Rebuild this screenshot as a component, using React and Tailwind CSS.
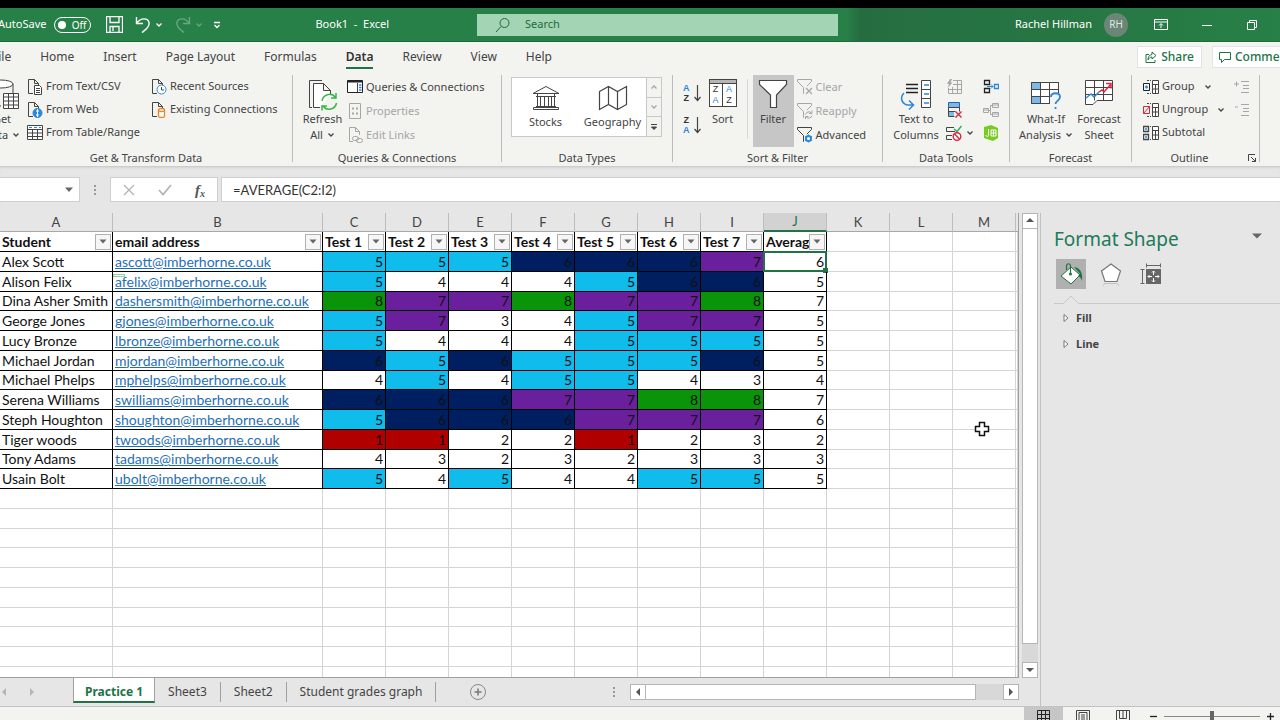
import React, { useState } from 'react';

const GREY = '#a6a6a6';
const DARK = '#444444';
const BLUE = '#2b88d8';

const columns = ['A', 'B', 'C', 'D', 'E', 'F', 'G', 'H', 'I', 'J', 'K', 'L', 'M'];
const headings = ['Student', 'email address', 'Test 1', 'Test 2', 'Test 3', 'Test 4', 'Test 5', 'Test 6', 'Test 7', 'Averag'];

const students = [
  { name: 'Alex Scott', email: 'ascott@imberhorne.co.uk', marks: [5, 5, 5, 6, 6, 6, 7, 6] },
  { name: 'Alison Felix', email: 'afelix@imberhorne.co.uk', marks: [5, 4, 4, 4, 5, 6, 6, 5] },
  { name: 'Dina Asher Smith', email: 'dashersmith@imberhorne.co.uk', marks: [8, 7, 7, 8, 7, 7, 8, 7] },
  { name: 'George Jones', email: 'gjones@imberhorne.co.uk', marks: [5, 7, 3, 4, 5, 7, 7, 5] },
  { name: 'Lucy Bronze', email: 'lbronze@imberhorne.co.uk', marks: [5, 4, 4, 4, 5, 5, 5, 5] },
  { name: 'Michael Jordan', email: 'mjordan@imberhorne.co.uk', marks: [6, 5, 6, 5, 5, 5, 6, 5] },
  { name: 'Michael Phelps', email: 'mphelps@imberhorne.co.uk', marks: [4, 5, 4, 5, 5, 4, 3, 4] },
  { name: 'Serena Williams', email: 'swilliams@imberhorne.co.uk', marks: [6, 6, 6, 7, 7, 8, 8, 7] },
  { name: 'Steph Houghton', email: 'shoughton@imberhorne.co.uk', marks: [5, 6, 6, 6, 7, 7, 7, 6] },
  { name: 'Tiger woods', email: 'twoods@imberhorne.co.uk', marks: [1, 1, 2, 2, 1, 2, 3, 2] },
  { name: 'Tony Adams', email: 'tadams@imberhorne.co.uk', marks: [4, 3, 2, 3, 2, 3, 3, 3] },
  { name: 'Usain Bolt', email: 'ubolt@imberhorne.co.uk', marks: [5, 4, 5, 4, 4, 5, 5, 5] },
];

const markColors = {
  1: 'bg-[#b00000]',
  5: 'bg-[#10bcec]',
  6: 'bg-[#001f60]',
  7: 'bg-[#6a209c]',
  8: 'bg-[#0a940a]',
};

// every fourth row is a pixel shorter
const rowHeight = (i) => (i % 4 === 3 ? 'h-[19px]' : 'h-5');

const Svg = ({ w = 16, h = 16, children, className = '' }) => (
  <svg width={w} height={h} viewBox={`0 0 ${w} ${h}`} fill="none" stroke={DARK} strokeWidth="1" className={`shrink-0 ${className}`} aria-hidden="true">
    {children}
  </svg>
);

const Chevron = ({ color = DARK, className = '' }) => (
  <Svg w={8} h={6} className={className}><path d="M1.5 1.5 4 4l2.5-2.5" stroke={color} strokeWidth="1.3" /></Svg>
);

const Page = ({ color = DARK, children }) => (
  <Svg>
    <path d="M6 14.5H1.5v-14h6l4 4V7M7.5.5v4h4" stroke={color} />
    {children}
  </Svg>
);

const IconCsv = () => (
  <Page><path d="M7.5 6.500h5l2 2v7h-7zM9 9.500h4M9 11.500h4M9 13.500h4" fill="#fff" /></Page>
);
const IconWeb = () => (
  <Page>
    <circle cx="10.500" cy="11" r="4.500" fill={BLUE} stroke={BLUE} />
    <path d="M10.500 7v8M9 9h3M9 13h3" stroke="#fff" />
  </Page>
);
const IconTable = () => (
  <Svg>
    <path d="M.5.500h15v14H.5zM.5 4.500h15M.5 8h15M.5 11.500h15M5.500 4.500v10M10.500 4.500v10" fill="#fff" />
    <path d="M2 2.500h3M7 2.500h3M12 2.500h2" stroke={BLUE} />
  </Svg>
);
const IconRecent = () => (
  <Page>
    <circle cx="10.500" cy="10.500" r="4.500" fill="#fff" stroke={BLUE} />
    <path d="M10.500 8v3H13" />
  </Page>
);
const IconExisting = () => (
  <Page>
    <path d="M7.500 8v6c0 2 6 2 6 0V8" fill="#fff" stroke="#e8832a" strokeWidth="1.3" />
    <ellipse cx="10.500" cy="8" rx="3" ry="1.500" fill="#fff" stroke="#e8832a" strokeWidth="1.300" />
  </Page>
);
const IconQueries = () => (
  <Svg>
    <path d="M.5 1.500h15v12H.5z" fill="#fff" stroke="#222" />
    <path d="M.5 2.500h15" stroke="#222" strokeWidth="2" />
    <path d="M10.500 4v9" />
    <path d="M12 6h2.500M12 8.500h2.500M12 11h2.500" stroke={BLUE} strokeWidth="1.400" />
  </Svg>
);
const IconProperties = () => (
  <Svg>
    <path d="M2.500.500h11v15h-11z" stroke={GREY} />
    <path d="M5 5.500h2M5 10.500h2M9 5.500h2M9 10.500h2" stroke={GREY} strokeWidth="2" />
  </Svg>
);
const IconLinks = () => (
  <Svg>
    <path d="M6 14.500H2.500v-14h6l4 4V8M8.500.500v4h4" stroke={GREY} />
    <rect x="5.500" y="9.500" width="6" height="4" rx="2" stroke={GREY} />
    <rect x="9.500" y="11.500" width="6" height="4" rx="2" stroke={GREY} />
  </Svg>
);
const IconGetData = () => (
  <Svg w={34} h={32}>
    <ellipse cx="16" cy="5" rx="12" ry="4" fill="#fff" />
    <path d="M4 5v18c0 3 6 4 12 4M28 5v9" />
    <path d="M18.500 14.500h15v15h-15zM18.500 18h15M18.500 22h15M18.500 26h15M23.500 14.500v15M28.500 14.500v15" fill="#fff" />
  </Svg>
);
const IconRefresh = () => (
  <Svg w={30} h={32}>
    <path d="M4 28.500H1.500V1.500H14" />
    <path d="M12 28.500H5.500V4.500h10l7 7V15M15.500 4.500v7h7" fill="#fff" />
    <g stroke="#3bb44a" strokeWidth="1.500">
      <path d="M14 22a7.500 7.500 0 0 1 13.500-3.500M28 14v5h-5" />
      <path d="M28.500 24A7.500 7.500 0 0 1 15 27M14 31.500V27h5" />
    </g>
  </Svg>
);
const IconStocks = () => (
  <Svg w={30} h={28}>
    <path d="M2 8.500 15 1.500l13 7zM5 11.500h20M5 21.500h20M2.500 24.500h25v-2h-25zM6.500 9v12M9.500 12v9M13.500 12v9M17.500 12v9M20.500 12v9M23.500 9v12" />
  </Svg>
);
const IconMap = () => (
  <Svg w={30} h={28}>
    <path d="M1.500 6.500 10.500 1.500l9 5 9-5v18l-9 5-9-5-9 5zM10.500 1.500v18M19.500 6.500v18" strokeWidth="1.200" />
  </Svg>
);

const SortLetters = ({ first, second }) => (
  <span className="flex items-center gap-1">
    <span className="flex flex-col font-['Liberation_Sans',sans-serif] text-[9px] font-bold leading-[10px]">
      <span className={first === 'A' ? 'text-[#2b88d8]' : 'text-[#333]'}>{first}</span>
      <span className={second === 'A' ? 'text-[#2b88d8]' : 'text-[#333]'}>{second}</span>
    </span>
    <Svg w={7} h={18}><path d="M3.500 1v15M.5 13l3 3.500 3-3.500" strokeWidth="1.200" /></Svg>
  </span>
);

const IconSort = () => (
  <span className="flex h-7 w-7 flex-col border border-[#444] bg-white font-['Liberation_Sans',sans-serif] text-[9px] leading-[11px]">
    <span className="h-1 border-b border-[#444] bg-[#b5b5b5]" />
    <span className="grid flex-1 grid-cols-2 text-center">
      <span className="border-r border-[#444] text-[#333]">Z</span>
      <span className="text-[#2b88d8]">A</span>
      <span className="border-r border-[#444] text-[#2b88d8]">A</span>
      <span className="text-[#333]">Z</span>
    </span>
  </span>
);

const IconFunnel = () => (
  <Svg w={30} h={30}><path d="M1.500 1.500h27v4L18.500 16v12.500h-6V16L1.500 5.500z" fill="#fff" strokeWidth="1.200" /></Svg>
);
const SmallFunnel = ({ color, children }) => (
  <Svg>
    <path d="M7 14.500h-.5V8.500L.5 2.500v-2h14v2L10 7" stroke={color} />
    {children}
  </Svg>
);
const IconClear = () => <SmallFunnel color={GREY}><path d="m9 9 6 6M15 9l-6 6" stroke={GREY} strokeWidth="1.300" /></SmallFunnel>;
const IconReapply = () => (
  <SmallFunnel color={GREY}>
    <path d="M8.500 11.500a3.500 3.500 0 0 1 6-1.500M15 7.500v3h-3M15 12.500a3.500 3.500 0 0 1-6 1.500M8.500 16v-2.500h3" stroke={GREY} />
  </SmallFunnel>
);
const IconAdvanced = () => (
  <SmallFunnel color={DARK}>
    <circle cx="11.500" cy="11.500" r="2.500" stroke={BLUE} strokeWidth="2" />
    <path d="M11.500 7.500v8M8 9.500l7 4M15 9.500l-7 4" stroke={BLUE} strokeWidth="1.200" />
    <circle cx="11.500" cy="11.500" r="1.500" fill="#fff" stroke="none" />
  </SmallFunnel>
);

const IconTextColumns = () => (
  <Svg w={32} h={32}>
    <path d="M6 5.500h12M6 9.500h12M6 13.500h12" strokeWidth="1.300" stroke="#222" />
    <path d="M21.500 1.500h9v27h-9zM21.500 10.500h9M21.500 19.500h9" fill="#fff" />
    <path d="M24 6h5M24 15h5M24 24h5" stroke={BLUE} strokeWidth="1.300" />
    <path d="M4 14c-4 4-3 10 3 12h6M9 21.500l4.500 4.500L9 30.500" stroke={BLUE} strokeWidth="1.500" />
  </Svg>
);
const IconFlashFill = () => (
  <Svg>
    <path d="M7 1.500h8.500v13h-13V9M2.500 10.500h13M7 5.500h8.500M6.500 8v6M11.500 1.500v13" stroke={GREY} />
    <path d="M4 0 1 5h2L1.500 9l5-5.500h-2L6 0z" fill={GREY} stroke="none" />
  </Svg>
);
const IconDuplicates = () => (
  <Svg>
    <path d="M2.500.500h11v5h-11z" fill="#7db8ea" stroke="#2467a8" />
    <path d="M2.500 5.500h11v4M2.500 5.500v9h6M2.500 9.500h7" />
    <path d="M3 10h5v4H3z" fill="#7db8ea" stroke="none" />
    <path d="m9.500 9.500 6 6M15.500 9.500l-6 6" stroke="#e0263c" strokeWidth="1.400" />
  </Svg>
);
const IconValidation = () => (
  <Svg>
    <path d="M8 2.500H.5v4H9M6 10.500H.5v4H6" />
    <path d="m8 4 3 2.500L15.500 1" stroke="#2fa84f" strokeWidth="1.400" />
    <circle cx="11" cy="11.500" r="3.800" fill="#fff" stroke="#d9263c" strokeWidth="1.400" />
    <path d="m8.500 9 5 5" stroke="#d9263c" strokeWidth="1.400" />
  </Svg>
);
const IconConsolidate = () => (
  <Svg>
    <path d="M1.500 1.500h5v4h-5zM1.500 9.500h5v4h-5z" stroke="#222" strokeWidth="1.300" />
    <path d="M11.500 5.500h4v4h-4z" stroke={BLUE} strokeWidth="1.300" />
    <path d="M4 7.500h6M8 5.500l2 2-2 2" stroke={BLUE} />
  </Svg>
);
const IconRelations = () => (
  <Svg>
    <path d="M.5 6.500h5v4h-5zM9.500 1.500h6v4h-6zM9.500 10.500h6v4h-6zM.5 8h5M9.500 3h6M9.500 12h6M5.500 8.500h2v-5h2M7.500 8.500v4h2" stroke={GREY} />
  </Svg>
);
const IconModel = () => (
  <Svg>
    <path d="M1 2 8 0l7 3v10l-5 3-9-3z" fill="#77cc1f" stroke="none" />
    <path d="M5.500 4v6c0 2-2.500 2-2.500 0M8 5h5v6H8zM8 8h5M10.500 5v6" stroke="#fff" />
  </Svg>
);
const IconWhatIf = () => (
  <Svg w={32} h={32}>
    <path d="M1.500 3.500h27v21h-27z" fill="#fff" />
    <path d="M2 4h9v6H2zM2 17h9v7H2z" fill="#7db8ea" stroke="none" />
    <path d="M1.500 3.500h27v21h-27zM1.500 10.500h27M1.500 17.500h27M10.500 3.500v21M19.500 3.500v21" />
    <path d="M20 14h11v16H20z" fill="#f3f3f0" stroke="none" />
    <path d="M21 18c0-5 9-5 9 0 0 4-4.500 3.500-4.500 7M25.500 28v2" stroke={BLUE} strokeWidth="1.800" />
  </Svg>
);
const IconForecast = () => (
  <Svg w={30} h={30}>
    <path d="M1.500 1.500h27v20H13l-4 4H1.500zM1.500 8.500h27M1.500 15.500h27M10.500 1.500v20M19.500 1.500v20" fill="#fff" />
    <path d="m2 19 5-4 3 3 5-5" stroke={BLUE} strokeWidth="1.500" />
    <path d="m15 13 3-2 2 2 7-8M22 4.500h5v5" stroke="#e0263c" strokeWidth="1.500" />
  </Svg>
);
const IconOutline = ({ mark }) => (
  <Svg>
    <path d="M9.500 1.500h6v13h-6zM9.500 5.500h6M9.500 10h6M12.500 5.500v9" fill="#fff" />
    <path d="M4 1.500h4M4 14.500h4" strokeDasharray="2 1" />
    {mark === 'sub' ? (
      <>
        <path d="M.5 1.500h5v5h-5zM.5 9.500h5v5h-5z" strokeWidth="1.300" />
        <path d="M2 4h2M2 12h2" stroke={BLUE} strokeWidth="1.500" />
      </>
    ) : (
      <path d="M.500 4.500h6v7h-6z" stroke={mark === 'minus' ? '#d9263c' : '#222'} />
    )}
    {mark === 'plus' && <path d="M2 8h3M3.500 6.500v3" stroke={BLUE} strokeWidth="1.300" />}
    {mark === 'minus' && <path d="m.5 11.500 6-7" stroke="#d9263c" />}
  </Svg>
);
const IconDetail = ({ plus }) => (
  <Svg>
    <path d="M7 2.500h8M9 6.500h6M9 9.500h6M7 13.500h8" stroke={GREY} />
    <path d={plus ? 'M0 5h5M2.500 2.500v5' : 'M1 5h3'} stroke={GREY} />
  </Svg>
);

const Group = ({ title, width, children, launcher }) => (
  <>
    <section aria-label={title} className={`flex shrink-0 flex-col ${width}`}>
      <div className="flex h-[75px] items-start">{children}</div>
      <div className="flex h-4 items-center">
        <span className="flex-1 text-center leading-4">{title}</span>
        {launcher && (
          <button aria-label={`${title} settings`} className="mr-[2px]">
            <Svg w={10} h={10}><path d="M1.500 8V1.500H8M4 4l4.500 4.500M8.500 5v3.500H5" /></Svg>
          </button>
        )}
      </div>
    </section>
    <div className="h-[87px] w-px shrink-0 bg-[#bdbdbd]" />
  </>
);

const BigButton = ({ icon, lines, arrow, className = '' }) => (
  <button className={`flex shrink-0 flex-col items-center pt-1 ${className}`}>
    <span className="flex h-8 items-start justify-center">{icon}</span>
    {lines.map((line, i) => (
      <span key={line} className="flex h-4 items-center gap-1 whitespace-nowrap leading-4">
        {line}
        {arrow && i === lines.length - 1 && <Chevron />}
      </span>
    ))}
  </button>
);

const SmallButton = ({ icon, label, disabled, arrow, tall }) => (
  <button disabled={disabled} className={`flex items-center gap-[3px] whitespace-nowrap ${tall ? 'h-6' : 'h-[23px]'} ${disabled ? 'text-[#a6a6a6]' : ''}`}>
    {icon}
    {label}
    {arrow && <Chevron className="ml-[6px]" />}
  </button>
);

const TitleBar = () => (
  <header className="flex h-[34px] shrink-0 items-center overflow-hidden border-b border-[#1d6a3a] bg-[#278047] text-white">
    <div className="flex w-[477px] shrink-0 items-center">
      <label className="-ml-[2px] flex items-center gap-2">
        <span>AutoSave</span>
        <input type="checkbox" className="sr-only" />
        <span className="flex h-4 w-[37px] items-center justify-between rounded-full border border-white pl-[3px] pr-1 text-[10px] leading-3">
          <span className="h-2 w-2 rounded-full bg-white" />
          Off
        </span>
      </label>
      <button aria-label="Save" className="ml-[15px]">
        <Svg w={17} h={17}><path d="M.5.500h16v16H.5zM4 .5v6h9V.5M4 16.500v-6h9v6M7 11v4" stroke="#fff" strokeWidth="1.300" /></Svg>
      </button>
      <button aria-label="Undo" className="ml-3 flex items-center gap-1">
        <Svg w={16} h={17}><path d="M1.500 1v6.500H8M1.500 7.500C6 1 13 2 14 6.500S10 14 7 16.500" stroke="#fff" strokeWidth="1.400" /></Svg>
        <Chevron color="#fff" />
      </button>
      <button aria-label="Redo" disabled className="ml-3 flex items-center gap-1 opacity-30">
        <Svg w={16} h={17}><path d="M14.500 1v6.500H8M14.500 7.500C10 1 3 2 2 6.500S6 14 9 16.500" stroke="#fff" strokeWidth="1.400" /></Svg>
        <Chevron color="#fff" />
      </button>
      <button aria-label="Customize Quick Access Toolbar" className="ml-[10px]">
        <Svg w={8} h={8}><path d="M1 1.500h6M1.500 4 4 6.500 6.500 4" stroke="#fff" strokeWidth="1.300" /></Svg>
      </button>
      <h1 className="ml-[94px] whitespace-pre">Book1  -  Excel</h1>
    </div>
    <label className="flex h-[22px] w-[361px] shrink-0 items-center gap-[14px] bg-[#a3d4b4] pl-[18px]">
      <Svg><circle cx="9.500" cy="6" r="4.500" stroke="#1e6b3c" /><path d="M6 9.500 1 15" stroke="#1e6b3c" /></Svg>
      <input type="search" aria-label="Search" placeholder="Search" className="w-full bg-transparent text-[#1e6b3c] outline-none placeholder:text-[#1e6b3c]" />
    </label>
    <div className="flex h-full flex-1 items-center bg-linear-to-r from-[#278047] from-2% via-[#256d40] via-5% to-[#278047]">
      <button className="ml-[176px] flex shrink-0 items-center gap-[11px]">
        <span className="w-[79px] whitespace-nowrap">Rachel Hillman</span>
        <span className="flex h-6 w-6 items-center justify-center rounded-full bg-[#6b8577] text-[10px] text-[#dfe8e2]">RH</span>
      </button>
      <button aria-label="Ribbon display options" className="ml-[26px]">
        <Svg w={14} h={12}><path d="M.5.500h13v10H.5zM.5 3h13M7 9V5M5 6.500 7 4.500l2 2" stroke="#fff" /></Svg>
      </button>
      <button aria-label="Minimize" className="ml-[34px]">
        <Svg w={11} h={12}><path d="M0 6.500h10" stroke="#fff" /></Svg>
      </button>
      <button aria-label="Restore" className="ml-[34px]">
        <Svg w={11} h={12}><path d="M.5 3.500h7v7h-7zM2.500 3V1.500h7v7H8" stroke="#fff" /></Svg>
      </button>
    </div>
  </header>
);

const MenuTabs = () => {
  const [active, setActive] = useState('Data');
  const tabs = ['File', 'Home', 'Insert', 'Page Layout', 'Formulas', 'Data', 'Review', 'View', 'Help'];
  return (
    <div className="flex h-[33px] shrink-0 items-start overflow-hidden">
      <nav className="-ml-2 flex flex-1 gap-[29px] pt-[5px] text-[12px]">
        {tabs.map((tab) => (
          <button
            key={tab}
            onClick={() => setActive(tab)}
            className={`h-[22px] whitespace-nowrap border-b-2 ${tab === active ? 'border-[#217346] font-semibold text-[#333]' : 'border-transparent'}`}
          >
            {tab}
          </button>
        ))}
      </nav>
      <div className="-mr-7 flex gap-[10px] pt-1 text-[12px] font-medium text-[#217346]">
        <button className="flex h-[22px] w-[65px] items-center justify-center gap-1 border border-[#e3e3e1] bg-white">
          <Svg w={12} h={13}><path d="M4 3.500H1v8h9V9M7 1l4 3.500L7 8V6C5 6 4 7 3 9c0-3 1-5 4-5.500z" stroke="#217346" /></Svg>
          Share
        </button>
        <button className="flex h-[22px] w-24 items-center gap-1 border border-[#e3e3e1] bg-white pl-[6px]">
          <Svg w={12} h={12}><path d="M.5 1.500h11v7h-6l-3 3v-3h-2z" stroke="#217346" /></Svg>
          Comments
        </button>
      </div>
    </div>
  );
};

const Ribbon = () => (
  <div className="flex h-[91px] shrink-0 overflow-hidden">
    <Group title="Get & Transform Data" width="w-[292px]">
      <BigButton icon={<IconGetData />} lines={['Get', 'Data']} arrow className="-ml-[15px] w-[34px]" />
      <div className="ml-2 flex w-[125px] flex-col">
        <SmallButton icon={<IconCsv />} label="From Text/CSV" />
        <SmallButton icon={<IconWeb />} label="From Web" />
        <SmallButton icon={<IconTable />} label="From Table/Range" />
      </div>
      <div className="-ml-px flex flex-col">
        <SmallButton icon={<IconRecent />} label="Recent Sources" />
        <SmallButton icon={<IconExisting />} label="Existing Connections" />
      </div>
    </Group>
    <Group title="Queries & Connections" width="w-[208px]">
      <BigButton icon={<IconRefresh />} lines={['Refresh', 'All']} arrow className="ml-2 w-[43px]" />
      <div className="ml-[3px] flex flex-col">
        <SmallButton tall icon={<IconQueries />} label="Queries & Connections" />
        <SmallButton tall icon={<IconProperties />} label="Properties" disabled />
        <SmallButton tall icon={<IconLinks />} label="Edit Links" disabled />
      </div>
    </Group>
    <Group title="Data Types" width="w-[170px]">
      <div className="ml-[9px] mt-[2px] flex h-[60px] w-[151px] border border-[#c8c8c8] bg-white">
        <button className="flex flex-1 flex-col items-center pt-[7px]">
          <IconStocks />
          <span className="mt-px leading-4">Stocks</span>
        </button>
        <button className="flex flex-1 flex-col items-center pt-[7px]">
          <IconMap />
          <span className="mt-px leading-4">Geography</span>
        </button>
        <div className="flex w-[15px] flex-col border-l border-[#c8c8c8] bg-[#f3f3f0]">
          <button aria-label="Previous" className="flex flex-1 items-center justify-center border-b border-[#c8c8c8]"><Chevron color="#a6a6a6" className="rotate-180" /></button>
          <button aria-label="Next" className="flex flex-1 items-center justify-center border-b border-[#c8c8c8]"><Chevron color="#a6a6a6" /></button>
          <button aria-label="More" className="flex flex-1 items-center justify-center">
            <Svg w={8} h={8}><path d="M1 1.500h6M1.500 4 4 6.500 6.500 4z" fill={DARK} /></Svg>
          </button>
        </div>
      </div>
    </Group>
    <Group title="Sort & Filter" width="w-[209px]">
      <div className="ml-[10px] mt-2 flex flex-col gap-3">
        <button aria-label="Sort A to Z"><SortLetters first="A" second="Z" /></button>
        <button aria-label="Sort Z to A"><SortLetters first="Z" second="A" /></button>
      </div>
      <BigButton icon={<IconSort />} lines={['Sort']} className="ml-[6px] w-8" />
      <div className="ml-2 mt-1 h-[60px] w-px bg-[#d8d8d6]" />
      <BigButton icon={<IconFunnel />} lines={['Filter']} className="ml-[5px] h-[72px] w-[41px] bg-[#c6c6c6]" />
      <div className="ml-[3px] flex flex-col">
        <SmallButton tall icon={<IconClear />} label="Clear" disabled />
        <SmallButton tall icon={<IconReapply />} label="Reapply" disabled />
        <SmallButton tall icon={<IconAdvanced />} label="Advanced" />
      </div>
    </Group>
    <Group title="Data Tools" width="w-[126px]">
      <BigButton icon={<IconTextColumns />} lines={['Text to', 'Columns']} className="ml-2 w-[50px]" />
      <div className="ml-[5px] flex w-[37px] flex-col">
        <button aria-label="Flash Fill" className="flex h-[23px] items-center"><IconFlashFill /></button>
        <button aria-label="Remove Duplicates" className="flex h-[23px] items-center"><IconDuplicates /></button>
        <button aria-label="Data Validation" className="flex h-[23px] items-center gap-1"><IconValidation /><Chevron /></button>
      </div>
      <div className="flex flex-col">
        <button aria-label="Consolidate" className="flex h-[23px] items-center"><IconConsolidate /></button>
        <button aria-label="Relationships" disabled className="flex h-[23px] items-center"><IconRelations /></button>
        <button aria-label="Manage Data Model" className="flex h-[23px] items-center"><IconModel /></button>
      </div>
    </Group>
    <Group title="Forecast" width="w-[121px]">
      <BigButton icon={<IconWhatIf />} lines={['What-If', 'Analysis']} arrow className="ml-2 w-[56px]" />
      <BigButton icon={<IconForecast />} lines={['Forecast', 'Sheet']} className="w-[50px]" />
    </Group>
    <Group title="Outline" width="w-[127px]" launcher>
      <div className="ml-[11px] flex w-[91px] flex-col">
        <SmallButton icon={<IconOutline mark="plus" />} label="Group" arrow />
        <SmallButton icon={<IconOutline mark="minus" />} label="Ungroup" arrow />
        <SmallButton icon={<IconOutline mark="sub" />} label="Subtotal" />
      </div>
      <div className="flex flex-col">
        <button aria-label="Show Detail" disabled className="flex h-[23px] items-center"><IconDetail plus /></button>
        <button aria-label="Hide Detail" disabled className="flex h-[23px] items-center"><IconDetail /></button>
      </div>
    </Group>
  </div>
);

const FormulaBar = () => (
  <div className="flex h-[47px] shrink-0 items-center bg-[#e6e6e6] shadow-[inset_0_3px_3px_-2px_#c0c0c0]">
    <div className="flex h-[25px] w-20 shrink-0 items-center border border-l-0 border-[#cfcfcf] bg-white pr-[5px]">
      <input aria-label="Name Box" className="w-full min-w-0 flex-1 outline-none" />
      <Svg w={10} h={6}><path d="M1 .5h8l-4 4.500z" fill="#666" stroke="none" /></Svg>
    </div>
    <Svg w={30} h={12}><path d="M15 1v2M15 5v2M15 9v2" stroke="#999" strokeWidth="2" /></Svg>
    <div className="flex h-[25px] w-[108px] shrink-0 items-center justify-between border border-[#cfcfcf] bg-white px-3">
      <button aria-label="Cancel"><Svg w={12} h={12}><path d="m1 1 10 10M11 1 1 11" stroke="#b5b5b5" strokeWidth="1.400" /></Svg></button>
      <button aria-label="Enter"><Svg w={14} h={12}><path d="m1 6 4 4.500L13 1" stroke="#b5b5b5" strokeWidth="1.800" /></Svg></button>
      <button aria-label="Insert Function" className="font-['Liberation_Serif',serif] text-[15px] font-bold italic leading-4 text-[#555]">f<sub className="text-[10px]">x</sub></button>
    </div>
    <input
      aria-label="Formula"
      defaultValue="=AVERAGE(C2:I2)"
      className="ml-[3px] h-[25px] min-w-0 flex-1 border border-r-0 border-[#cfcfcf] bg-white px-[11px] font-['Lato',sans-serif] text-[13px] text-[#333] outline-none"
    />
  </div>
);

const FilterButton = ({ label }) => (
  <button aria-label={`Filter ${label}`} className="flex h-4 w-4 shrink-0 items-center justify-center border border-[#b0b0b0] bg-[#f6f6f6]">
    <Svg w={8} h={5}><path d="M.5.500h7L4 4.500z" fill="#666" stroke="none" /></Svg>
  </button>
);

const Grid = () => {
  const blank = 'border-b border-r border-[#d4d4d4]';
  const inked = 'border-b border-r border-black';
  return (
    <div className="relative min-w-0 flex-1 overflow-hidden border-b border-r border-[#a0a0a0] bg-white">
      <table className="w-full table-fixed border-separate border-spacing-0 font-['Lato',sans-serif] text-[14px] leading-[18px] text-[#111]">
        <colgroup>
          <col className="w-[113px]" />
          <col className="w-[210px]" />
          {columns.slice(2).map((c) => <col key={c} className="w-[63px]" />)}
          <col />
        </colgroup>
        <thead>
          <tr className="h-[19px] bg-[#e6e6e6] text-[13px] text-[#444]">
            {columns.map((c) => (
              <th
                key={c}
                scope="col"
                className={`border-r border-r-[#bdbdbd] p-0 font-normal ${c === 'J' ? 'border-b-2 border-b-[#217346] bg-[#d2d2d2] leading-[17px] text-[#217346]' : 'border-b border-b-[#a8a8a8]'}`}
              >
                {c}
              </th>
            ))}
            <td className="border-b border-[#a8a8a8] p-0" />
          </tr>
        </thead>
        <tbody>
          <tr className={rowHeight(0)}>
            {headings.map((h) => (
              <th key={h} scope="col" className={`p-0 text-left font-bold ${inked}`}>
                <div className="flex items-center pl-[2px] pr-px">
                  <span className="min-w-0 flex-1 overflow-hidden whitespace-nowrap">{h}</span>
                  <FilterButton label={h} />
                </div>
              </th>
            ))}
            {[0, 1, 2, 3].map((n) => <td key={n} className={`p-0 ${blank}`} />)}
          </tr>
          {students.map((s, r) => (
            <tr key={s.name} className={rowHeight(r + 1)}>
              <td className={`whitespace-nowrap p-0 pl-[2px] ${inked}`}>{s.name}</td>
              <td className={`relative whitespace-nowrap p-0 pl-[2px] ${inked}`}>
                {r === 1 && <span className="absolute left-0 top-[2px] h-[3px] w-3 border border-[#8fd19e] bg-white" />}
                <a href={`mailto:${s.email}`} className="text-[#1f6fb8] underline">{s.email}</a>
              </td>
              {s.marks.map((m, c) => (
                <td key={c} className={`relative p-0 pr-[2px] text-right ${inked} ${c < 7 ? markColors[m] || '' : ''}`}>
                  {m}
                  {r === 0 && c === 7 && (
                    <span className="absolute -inset-px border-2 border-[#217346]">
                      <span className="absolute -bottom-[3px] -right-[3px] h-[5px] w-[5px] bg-[#217346]" />
                    </span>
                  )}
                </td>
              ))}
              {[0, 1, 2, 3].map((n) => <td key={n} className={`p-0 ${blank}`} />)}
            </tr>
          ))}
          {Array.from({ length: 11 }, (_, r) => (
            <tr key={r} className={rowHeight(r + 13)}>
              {Array.from({ length: 14 }, (_, c) => <td key={c} className={`p-0 ${blank}`} />)}
            </tr>
          ))}
        </tbody>
      </table>
      {/* mouse pointer */}
      <Svg w={16} h={16} className="absolute left-[974px] top-[208px]">
        <path d="M5.500 1.500h5v4h4v5h-4v4h-5v-4h-4v-5h4z" fill="#fff" stroke="#111" strokeWidth="1.500" />
      </Svg>
    </div>
  );
};

const arrows = {
  up: 'M0 5h8L4 1z',
  down: 'M0 2h8L4 6z',
  left: 'M6 0v8L2 4z',
  right: 'M2 0v8l4-4z',
};

const ScrollArrow = ({ dir }) => (
  <button aria-label={`Scroll ${dir}`} className="flex h-4 w-4 shrink-0 items-center justify-center border border-[#b5b5b5] bg-white">
    <Svg w={8} h={8}><path d={arrows[dir]} fill="#555" stroke="none" /></Svg>
  </button>
);

const SheetTabs = () => {
  const [sheet, setSheet] = useState('Practice 1');
  return (
    <div className="flex h-7 shrink-0 items-center bg-[#e6e6e6] pr-[21px] text-[12px]">
      <div className="flex w-[73px] shrink-0 gap-5">
        <button aria-label="Previous sheet"><Svg w={8} h={8}><path d="M6 0v8L2 4z" fill="#b5b5b5" stroke="none" /></Svg></button>
        <button aria-label="Next sheet"><Svg w={8} h={8}><path d="M2 0v8l4-4z" fill="#b5b5b5" stroke="none" /></Svg></button>
      </div>
      {['Practice 1', 'Sheet3', 'Sheet2', 'Student grades graph'].map((name) => (
        <button
          key={name}
          onClick={() => setSheet(name)}
          className={
            name === sheet
              ? 'h-[25px] self-start whitespace-nowrap border-x border-b-2 border-x-[#a0a0a0] border-b-[#217346] bg-white px-[11px] pt-1 font-bold text-[#217346]'
              : 'h-5 whitespace-nowrap border-r border-[#a0a0a0] px-[13px]'
          }
        >
          {name}
        </button>
      ))}
      <button aria-label="New sheet" className="ml-[34px]">
        <Svg><circle cx="8" cy="8" r="7.500" stroke="#888" /><path d="M8 4.500v7M4.500 8h7" stroke="#777" strokeWidth="1.500" /></Svg>
      </button>
      <Svg w={4} h={12} className="ml-auto"><path d="M2 1v2M2 5v2M2 9v2" stroke="#999" strokeWidth="2" /></Svg>
      <div className="ml-[14px] flex w-[389px] shrink-0">
        <ScrollArrow dir="left" />
        <div className="flex flex-1 bg-[#d8d8d8] pr-[27px]">
          <div className="h-4 flex-1 border border-l-0 border-[#b5b5b5] bg-white" />
        </div>
        <ScrollArrow dir="right" />
      </div>
    </div>
  );
};

const FormatPanel = () => (
  <aside className="w-[240px] shrink-0 border-l border-[#c0c0c0] bg-[#e6e6e6] pl-[13px]">
    <div className="flex items-start justify-between pr-[18px] pt-3">
      <h2 className="font-['Noto_Sans',sans-serif] text-[19px] leading-7 text-[#217a5a]">Format Shape</h2>
      <button aria-label="Pane options" className="mt-2"><Svg w={10} h={6}><path d="M0 .5h10L5 5.500z" fill="#666" stroke="none" /></Svg></button>
    </div>
    <div className="mt-[6px] flex items-center gap-[10px] pl-[2px]">
      <button aria-label="Fill & Line" className="flex h-[30px] w-[30px] items-center justify-center bg-[#b0b0b0]">
        <Svg w={24} h={24}>
          <path d="m2 14 10-9 9 8-9 9z" fill="#fff" stroke="#217346" />
          <path d="M11.500 13V4c0-3-4-3-4 0v4" stroke="#217346" strokeWidth="1.200" />
          <circle cx="11.500" cy="12" r="1.500" fill="#217346" stroke="none" />
          <path d="M15 5c6 1 9 5 8 14-1-3-2-4-4-5l2-2z" fill="#217346" stroke="none" />
        </Svg>
      </button>
      <button aria-label="Effects" className="flex h-[30px] w-[30px] items-center justify-center">
        <Svg w={22} h={24}><path d="M11 2 1.500 9 5 19.500h12L20.500 9z" fill="#fff" stroke="#777" strokeWidth="1.200" /><path d="m5 21-2 3M17 21l2 3M5 21.500h12" stroke="#c4c4c4" /></Svg>
      </button>
      <button aria-label="Size & Properties" className="flex h-[30px] w-[30px] items-center justify-center">
        <Svg w={22} h={22}>
          <path d="M6.500 2.500h14M6.500.500v4M20.500.500v4M2.500 6.500v14M.5 6.500h4M.5 20.500h4" stroke="#666" />
          <path d="M6 6h15v15H6z" fill="#666" stroke="none" />
          <path d="M13.500 8v4M13.500 15v4M8 13.500h4M15 13.500h4M12 9.500 13.500 8 15 9.500M12 17.500l1.500 1.500 1.500-1.500M9.500 12 8 13.500 9.500 15M17.500 12l1.500 1.500-1.500 1.500" stroke="#fff" />
        </Svg>
      </button>
    </div>
    <svg width="100%" height="10" className="mt-[5px] block" fill="none" stroke="#c8c8c8" aria-hidden="true">
      <path d="M0 9.500h9.500L17 2l7.500 7.500H1200" />
    </svg>
    <div className="flex flex-col items-start pl-[9px] pt-px text-[11px] font-bold text-[#444]">
      {['Fill', 'Line'].map((item) => (
        <button key={item} className="flex h-[26px] items-center gap-[7px]">
          <Svg w={6} h={10} className="-mt-px"><path d="M1 1.500v7L5 5z" fill="#fff" stroke="#777" /></Svg>
          {item}
        </button>
      ))}
    </div>
  </aside>
);

const StatusBar = () => (
  <footer className="flex h-[14px] shrink-0 items-start justify-end overflow-hidden border-t border-[#c4c4c4] bg-[#f3f3f0]">
    <button aria-label="Normal view" className="flex h-6 w-[39px] justify-center bg-[#c6c6c6] pt-[3px]">
      <Svg w={13} h={13}><path d="M.5.500h12v12H.5zM.5 4.500h12M.5 8.500h12M4.500.500v12M8.500.500v12" stroke="#222" /></Svg>
    </button>
    <button aria-label="Page Layout view" className="flex h-6 w-10 justify-center pt-[3px]">
      <Svg w={14} h={13}><path d="M.5.500h13v14H.5zM3 2.500h8v11H3zM5 5h4M5 7h4M5 9h4M5 11h4" /></Svg>
    </button>
    <button aria-label="Page Break view" className="flex h-6 w-10 justify-center pt-[3px]">
      <Svg w={14} h={13}><path d="M.5.500h13v14H.5zM3.500.500v8h7v-8M7 .5v8" /></Svg>
    </button>
    <button aria-label="Zoom out" className="ml-[3px] flex h-5 w-[14px] items-start justify-center pt-[6px]">
      <Svg w={9} h={9}><path d="M1 3.500h7" stroke="#222" strokeWidth="1.300" /></Svg>
    </button>
    <input type="range" aria-label="Zoom" defaultValue="50" className="mx-1 mt-[7px] h-[5px] w-24 appearance-none bg-transparent [&::-webkit-slider-runnable-track]:h-px [&::-webkit-slider-runnable-track]:bg-[#888] [&::-webkit-slider-thumb]:-mt-[5px] [&::-webkit-slider-thumb]:h-[11px] [&::-webkit-slider-thumb]:w-1 [&::-webkit-slider-thumb]:appearance-none [&::-webkit-slider-thumb]:bg-[#666]" />
    <button aria-label="Zoom in" className="mr-1 flex h-5 w-3 items-start justify-center pt-[6px]">
      <Svg w={9} h={9}><path d="M1 3.500h7M4.500 0v7" stroke="#222" strokeWidth="1.300" /></Svg>
    </button>
  </footer>
);

export default function App() {
  return (
    <div className="flex h-screen flex-col overflow-hidden bg-[#f3f3f0] font-['Noto_Sans',sans-serif] text-[11px] text-[#444]">
      <div className="h-2 shrink-0 bg-black" />
      <TitleBar />
      <MenuTabs />
      <Ribbon />
      <FormulaBar />
      <main className="flex min-h-0 flex-1 bg-[#e6e6e6]">
        <div className="flex min-w-0 flex-1 flex-col">
          <div className="flex min-h-0 flex-1">
            <Grid />
            <div className="ml-[3px] mr-[2px] flex flex-col bg-[#d8d8d8]">
              <ScrollArrow dir="up" />
              <div className="mb-[18px] w-4 flex-1 border border-t-0 border-[#b5b5b5] bg-white" />
              <ScrollArrow dir="down" />
            </div>
          </div>
          <SheetTabs />
        </div>
        <FormatPanel />
      </main>
      <StatusBar />
    </div>
  );
}
